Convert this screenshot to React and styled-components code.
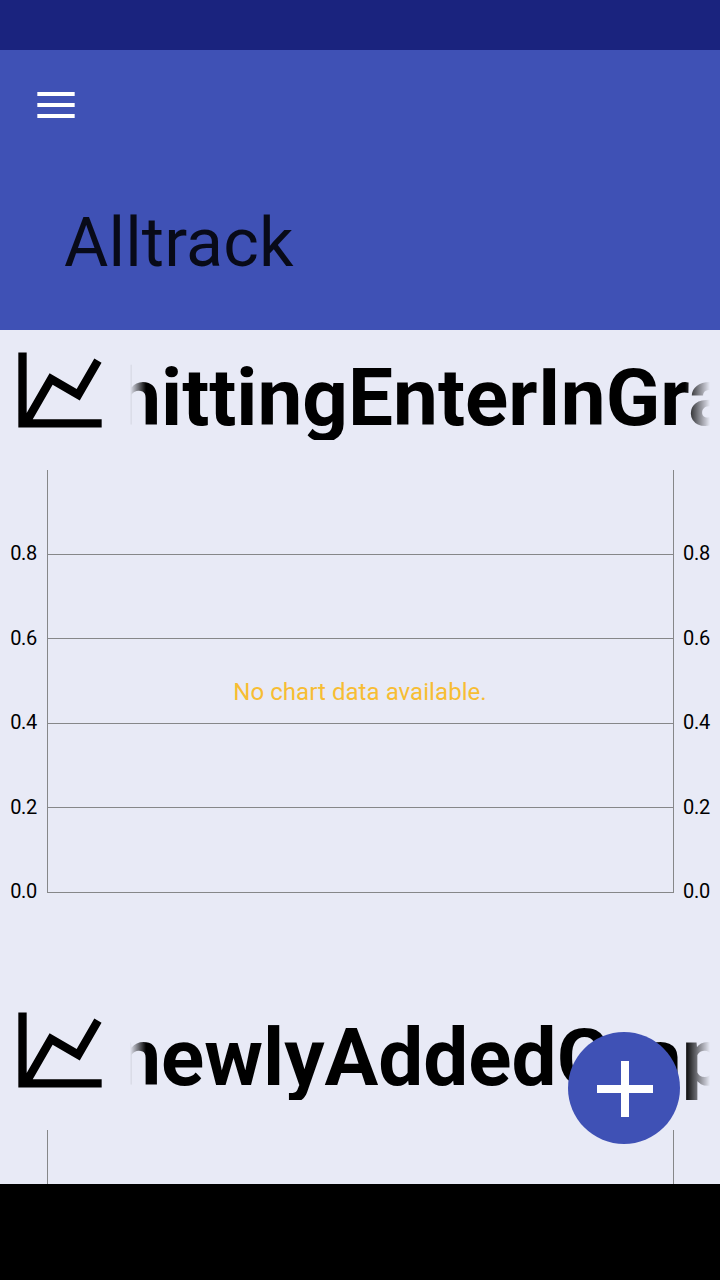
import React from "react";
import styled, { createGlobalStyle } from "styled-components";

const GlobalStyle = createGlobalStyle`
  * { box-sizing: border-box; }
  body { margin: 0; background: #000; }
`;

const Screen = styled.div`
  position: relative;
  display: flex;
  flex-direction: column;
  width: 720px;
  height: 1280px;
  overflow: hidden;
  font-family: Roboto, sans-serif;
  color: #000;
`;

const StatusBar = styled.div`
  flex: 0 0 50px;
  background: #1a237e;
`;

const AppBar = styled.header`
  flex: 0 0 280px;
  display: flex;
  flex-direction: column;
  justify-content: space-between;
  padding: 31px 32px 47px 32px;
  background: #3f51b5;
`;

const MenuButton = styled.button`
  display: flex;
  width: 48px;
  height: 48px;
  padding: 0;
  border: 0;
  background: none;
`;

const AppTitle = styled.h1`
  margin: 0 0 0 32px;
  font-size: 68px;
  line-height: 80px;
  font-weight: 400;
  letter-spacing: 0.14px;
  color: rgba(0, 0, 0, 0.87);
`;

const GraphList = styled.main`
  flex: 1;
  min-height: 0;
  overflow: hidden;
  background: #e8eaf6;
`;

const NavBar = styled.div`
  flex: 0 0 96px;
  background: #000;
`;

const Card = styled.section`
  height: 660px;
`;

const CardHeader = styled.div`
  display: flex;
  gap: 20px;
  height: 140px;
  padding: 10px 10px 30px;
`;

const ChartIcon = styled.svg`
  flex: 0 0 100px;
  height: 100px;
`;

const Marquee = styled.div`
  flex: 1;
  min-width: 0;
  height: 100px;
  overflow: hidden;
  mask-image: linear-gradient(
    to right,
    transparent 0,
    #000 16px,
    #000 calc(100% - 25px),
    transparent 100%
  );
`;

const GraphName = styled.h2`
  margin: 0 0 0 -13.8px;
  padding-top: 11px;
  font-size: 80px;
  line-height: 94px;
  font-weight: 700;
  white-space: nowrap;
`;

const Plot = styled.div`
  display: grid;
  grid-template-rows: 85px 84px 85px 84px 85px;
  position: relative;
`;

const PlotCell = styled.div`
  border: solid #868789;
  border-width: 0 1px 1px 1px;
`;

const AxisLabel = styled.span`
  align-self: end;
  margin-bottom: -9px;
  padding: ${(p) => (p.$side === "left" ? "0 10px 0 0" : "0 0 0 9px")};
  text-align: ${(p) => (p.$side === "left" ? "right" : "left")};
  font-size: 20px;
  line-height: 20px;
  letter-spacing: -0.3px;
`;

const PlotRow = styled.div`
  display: grid;
  grid-template-columns: 47px 627px 46px;

  &:nth-child(odd) ${AxisLabel} {
    margin-bottom: -8px;
  }
`;

const EmptyMessage = styled.p`
  position: absolute;
  inset: 208px 0 auto;
  margin: 0;
  text-align: center;
  font-size: 24px;
  line-height: 28px;
  letter-spacing: 0.06px;
  color: #f7bd33;
`;

const AddButton = styled.button`
  position: absolute;
  right: 40px;
  bottom: 136px;
  width: 112px;
  height: 112px;
  padding: 0;
  border: 0;
  border-radius: 50%;
  background: #3f51b5;
`;

const TICKS = ["0.8", "0.6", "0.4", "0.2", "0.0"];

function GraphCard({ name }) {
  return (
    <Card>
      <CardHeader>
        <ChartIcon viewBox="0 0 24 24" aria-hidden="true">
          <path d="M16 11.78 20.24 4.45 21.97 5.45 16.74 14.5 10.23 10.75 5.46 19H22V21H2V3H4V17.54L9.5 8Z" />
        </ChartIcon>
        <Marquee>
          <GraphName>{name}</GraphName>
        </Marquee>
      </CardHeader>
      <Plot>
        {TICKS.map((tick) => (
          <PlotRow key={tick}>
            <AxisLabel $side="left">{tick}</AxisLabel>
            <PlotCell />
            <AxisLabel $side="right">{tick}</AxisLabel>
          </PlotRow>
        ))}
        <EmptyMessage>No chart data available.</EmptyMessage>
      </Plot>
    </Card>
  );
}

export default function App() {
  return (
    <Screen>
      <GlobalStyle />
      <StatusBar />
      <AppBar>
        <MenuButton aria-label="Menu">
          <svg width="48" height="48" viewBox="0 0 48 48" fill="#fff">
            <path d="M5.33 11h37.34v4H5.33zM5.33 22h37.34v4H5.33zM5.33 33h37.34v4H5.33z" />
          </svg>
        </MenuButton>
        <AppTitle>Alltrack</AppTitle>
      </AppBar>
      <GraphList>
        <GraphCard name="hittingEnterInGraph" />
        <GraphCard name="newlyAddedGraph" />
      </GraphList>
      <NavBar />
      <AddButton aria-label="Add graph">
        <svg width="112" height="112" viewBox="0 0 112 112" fill="#fff">
          <path d="M53 29h8v24h24v8H61v24h-8V61H29v-8h24z" />
        </svg>
      </AddButton>
    </Screen>
  );
}
